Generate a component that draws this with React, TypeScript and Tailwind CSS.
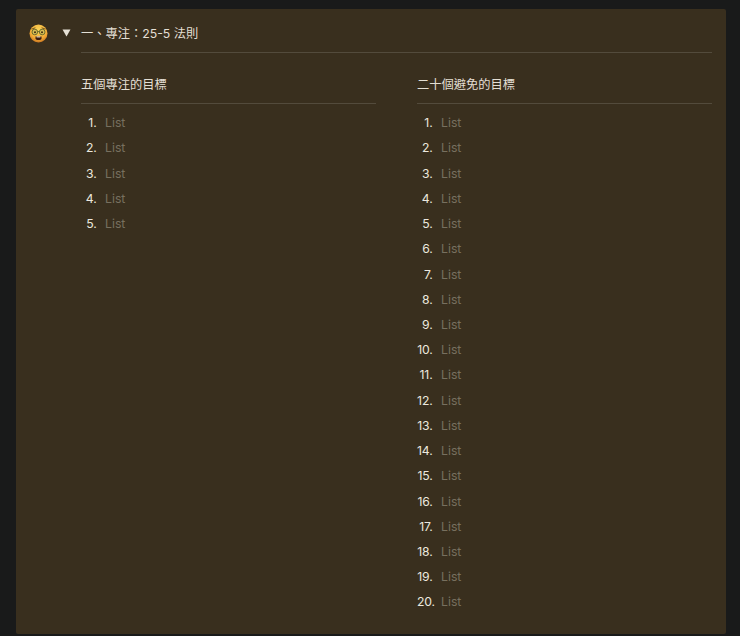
const font = { fontFamily: '"Inter", "Noto Sans CJK TC", sans-serif' };

function NerdFace() {
  return (
    <svg width="19" height="19" viewBox="0 0 19 19" className="shrink-0">
      <defs>
        <radialGradient id="face" cx="50%" cy="30%" r="72%">
          <stop offset="0%" stopColor="#fbd65a" />
          <stop offset="65%" stopColor="#f3ae38" />
          <stop offset="100%" stopColor="#c9731f" />
        </radialGradient>
      </defs>
      <circle cx="9.5" cy="9.5" r="9" fill="url(#face)" />
      <path d="M3 5 6 3.9M16 5 13 3.9" stroke="#6b4a18" strokeWidth="0.9" strokeLinecap="round" />
      <circle cx="5.8" cy="8" r="2.8" fill="#d8bf55" stroke="#6f6f2e" strokeWidth="1" />
      <circle cx="13.2" cy="8" r="2.8" fill="#d8bf55" stroke="#6f6f2e" strokeWidth="1" />
      <path d="M8.5 7.6h2" stroke="#6f6f2e" strokeWidth="1" />
      <circle cx="6" cy="8.2" r="1" fill="#3a2a12" />
      <circle cx="13" cy="8.2" r="1" fill="#3a2a12" />
      <path d="M6.5 12.4h6v1.8a1.8 1.8 0 0 1-1.8 1.8H8.3a1.8 1.8 0 0 1-1.8-1.8z" fill="#3c1d10" />
      <path d="M7.6 12.4h3.8v1H7.6z" fill="#f5efe0" />
    </svg>
  );
}

function NumberedList({ count }: { count: number }) {
  const items = Array.from({ length: count }, (_, i) => i + 1);
  return (
    <ol className="mt-[6.8px]">
      {items.map((n) => (
        <li key={n} className="flex h-[25.22px] items-center">
          <span className="w-[24px] pr-[8.5px] text-right text-[12.25px] tracking-[-0.2px] text-[#ece8df]">{n}.</span>
          <span className="text-[12.25px] text-[#77705f]">List</span>
        </li>
      ))}
    </ol>
  );
}

function Column({ title, count }: { title: string; count: number }) {
  return (
    <div className="min-w-0 flex-1">
      <div className="flex h-[38px] items-center border-b border-[#534b3c] pt-[1px] text-[12.25px] text-[#e4dfd4]">
        {title}
      </div>
      <NumberedList count={count} />
    </div>
  );
}

export default function App() {
  return (
    <div className="h-[636px] w-[740px] overflow-hidden bg-[#191a1a] pl-[16px] pt-[9px]" style={font}>
      <div className="flex h-[625px] w-[710px] rounded-[2px] bg-[#392f1e] pr-[14px] pt-[14px]">
        <div className="w-[65px] shrink-0 pl-[13px]">
          <div className="flex h-[20px] items-center">
            <NerdFace />
            <svg width="9" height="8" viewBox="0 0 9 8" className="ml-[14px] shrink-0">
              <path d="M0.5 0.5h8L4.5 7.5z" fill="#e6e1d6" />
            </svg>
          </div>
        </div>
        <div className="min-w-0 flex-1">
          <div className="flex h-[30px] items-start border-b border-[#534b3c] pt-[1px] text-[12.25px] leading-[20px] text-[#e4dfd4]">
            一、專注：25-5 法則
          </div>
          <div className="mt-[13px] flex gap-[41px]">
            <Column title="五個專注的目標" count={5} />
            <Column title="二十個避免的目標" count={20} />
          </div>
        </div>
      </div>
    </div>
  );
}
